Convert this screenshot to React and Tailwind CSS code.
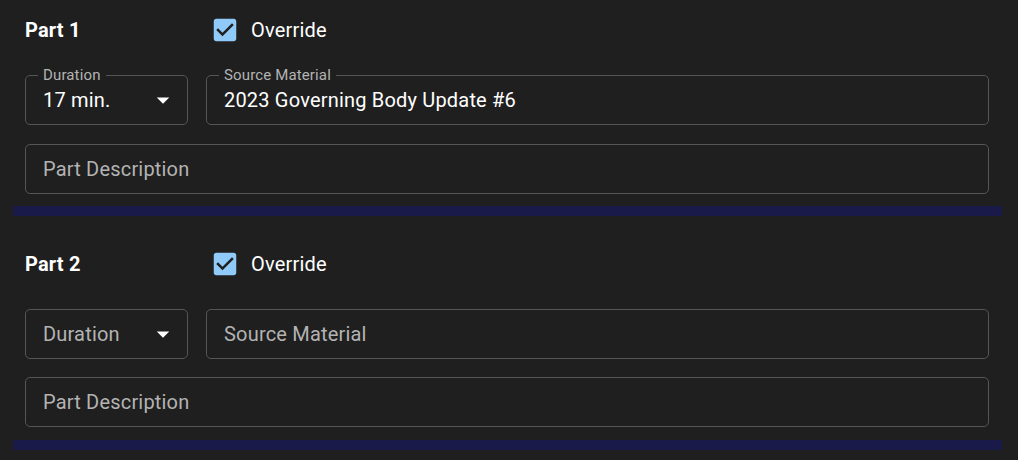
import React from "react";

const font = { fontFamily: "Roboto, 'Noto Sans', sans-serif" };

function Checkbox() {
  return (
    <svg width="30" height="30" viewBox="0 0 24 24" className="shrink-0">
      <path
        fill="#90caf9"
        d="M19 3H5c-1.11 0-2 .9-2 2v14c0 1.1.89 2 2 2h14c1.11 0 2-.9 2-2V5c0-1.1-.89-2-2-2zm-9 14l-5-5 1.41-1.41L10 14.17l7.59-7.59L19 8l-7 7z"
      />
    </svg>
  );
}

function Arrow() {
  return (
    <svg width="30" height="30" viewBox="0 0 24 24" className="absolute right-[9px] top-1/2 -translate-y-1/2">
      <path fill="#ffffff" d="M7 10l5 5 5-5z" />
    </svg>
  );
}

function Field({ label, value, placeholder, select, className }) {
  return (
    <div
      className={
        "relative h-[50px] rounded-[5px] border border-[#555555] flex items-center pl-[17px] " +
        (className || "")
      }
    >
      {label && (
        <span className="absolute left-[12px] -top-[9px] px-[5px] bg-[#1f1f1f] text-[15px] leading-[16px] tracking-[0.14px] text-[#b3b3b3]">
          {label}
        </span>
      )}
      {value ? (
        <span className="text-[20px] text-white leading-none tracking-[0.19px]">{value}</span>
      ) : (
        <span className="text-[20px] text-[#b3b3b3] leading-none tracking-[0.19px]">{placeholder}</span>
      )}
      {select && <Arrow />}
    </div>
  );
}

function Section({ n, duration, source, first }) {
  return (
    <div className={first ? "" : "mt-[18px]"}>
      <div className="h-[60px] flex items-center px-[12px]">
        <div className="w-[185px] text-[20px] font-bold text-white tracking-[0.19px]">Part {n}</div>
        <div className="flex items-center gap-[11px]">
          <Checkbox />
          <span className="text-[20px] text-white tracking-[0.19px]">Override</span>
        </div>
      </div>
      <div className="pl-[12px] pr-[13px]">
        <div className="mt-[15px] flex gap-[18px]">
          {duration ? (
            <Field label="Duration" value={duration} select className="w-[163px] shrink-0" />
          ) : (
            <Field placeholder="Duration" select className="w-[163px] shrink-0" />
          )}
          {source ? (
            <Field label="Source Material" value={source} className="flex-1" />
          ) : (
            <Field placeholder="Source Material" className="flex-1" />
          )}
        </div>
        <Field placeholder="Part Description" className={first ? "mt-[19px]" : "mt-[18px]"} />
      </div>
      <div className={(first ? "mt-[12px]" : "mt-[13px]") + " h-[10px] bg-[#1a1a4a]"} />
    </div>
  );
}

export default function App() {
  return (
    <div className="w-[1018px] h-[460px] bg-[#1f1f1f] overflow-hidden pl-[13px] pr-[16px]" style={font}>
      <Section n={1} duration="17 min." source="2023 Governing Body Update #6" first />
      <Section n={2} />
    </div>
  );
}
